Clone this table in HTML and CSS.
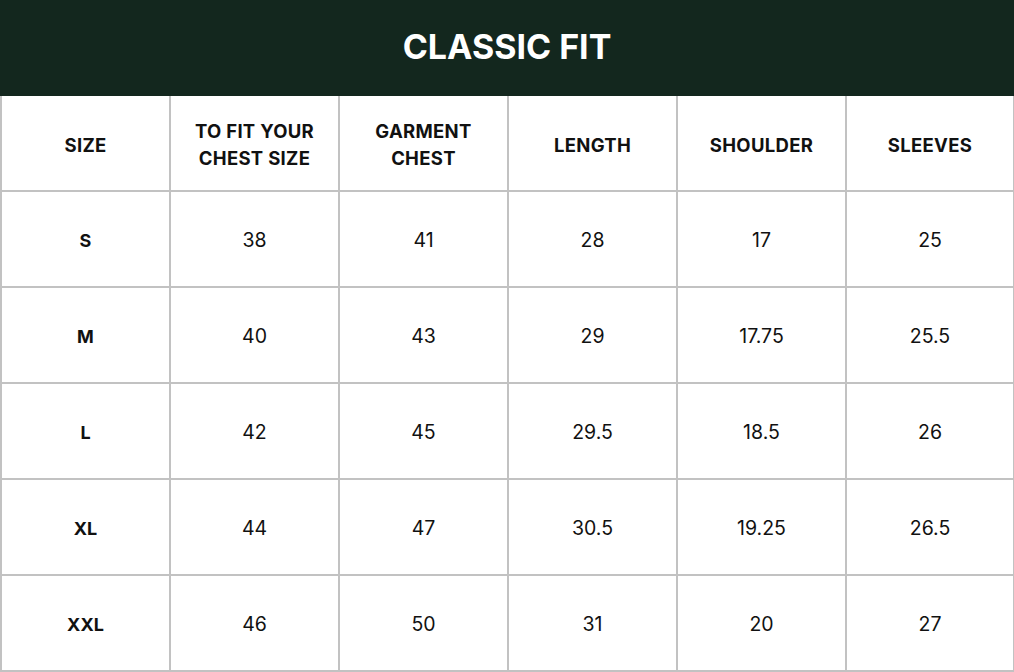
FILE: index.html
```html
<!DOCTYPE html>
<html>
<head>
<meta charset="utf-8">
<link rel="stylesheet" href="styles.css">
</head>
<body>
<div class="chart">
  <div class="title">CLASSIC FIT</div>
  <div class="grid">
    <div class="cell head">SIZE</div>
    <div class="cell head">TO FIT YOUR<br>CHEST SIZE</div>
    <div class="cell head">GARMENT<br>CHEST</div>
    <div class="cell head">LENGTH</div>
    <div class="cell head">SHOULDER</div>
    <div class="cell head last">SLEEVES</div>

    <div class="cell size">S</div><div class="cell">38</div><div class="cell">41</div><div class="cell">28</div><div class="cell">17</div><div class="cell last">25</div>
    <div class="cell size">M</div><div class="cell">40</div><div class="cell">43</div><div class="cell">29</div><div class="cell">17.75</div><div class="cell last">25.5</div>
    <div class="cell size">L</div><div class="cell">42</div><div class="cell">45</div><div class="cell">29.5</div><div class="cell">18.5</div><div class="cell last">26</div>
    <div class="cell size">XL</div><div class="cell">44</div><div class="cell">47</div><div class="cell">30.5</div><div class="cell">19.25</div><div class="cell last">26.5</div>
    <div class="cell size">XXL</div><div class="cell">46</div><div class="cell">50</div><div class="cell">31</div><div class="cell">20</div><div class="cell last">27</div>
  </div>
</div>
</body>
</html>
```
FILE: styles.css
```css
html, body {
  margin: 0;
  padding: 0;
  background: #ffffff;
}
.chart {
  width: 1014px;
  font-family: "Inter", "Open Sans", "Liberation Sans", sans-serif;
  color: #111111;
}
.title {
  height: 96px;
  background: #13271e;
  color: #ffffff;
  font-weight: 700;
  font-size: 34px;
  display: flex;
  align-items: center;
  justify-content: center;
  padding-bottom: 3px;
  box-sizing: border-box;
}
.grid {
  display: grid;
  grid-template-columns: repeat(6, 169px);
  grid-auto-rows: 96px;
}
.cell {
  box-sizing: border-box;
  border-left: 2px solid #c2c2c2;
  border-bottom: 2px solid #c2c2c2;
  display: flex;
  align-items: center;
  justify-content: center;
  text-align: center;
  font-size: 19.5px;
  font-weight: 400;
  padding-top: 2px;
}
.cell.last {
  border-right: 1px solid #c2c2c2;
}
.head {
  font-weight: 700;
  font-size: 18.5px;
  line-height: 27px;
  letter-spacing: 0.3px;
  padding-top: 4px;
}
.size {
  font-weight: 700;
  font-size: 18px;
}
```
